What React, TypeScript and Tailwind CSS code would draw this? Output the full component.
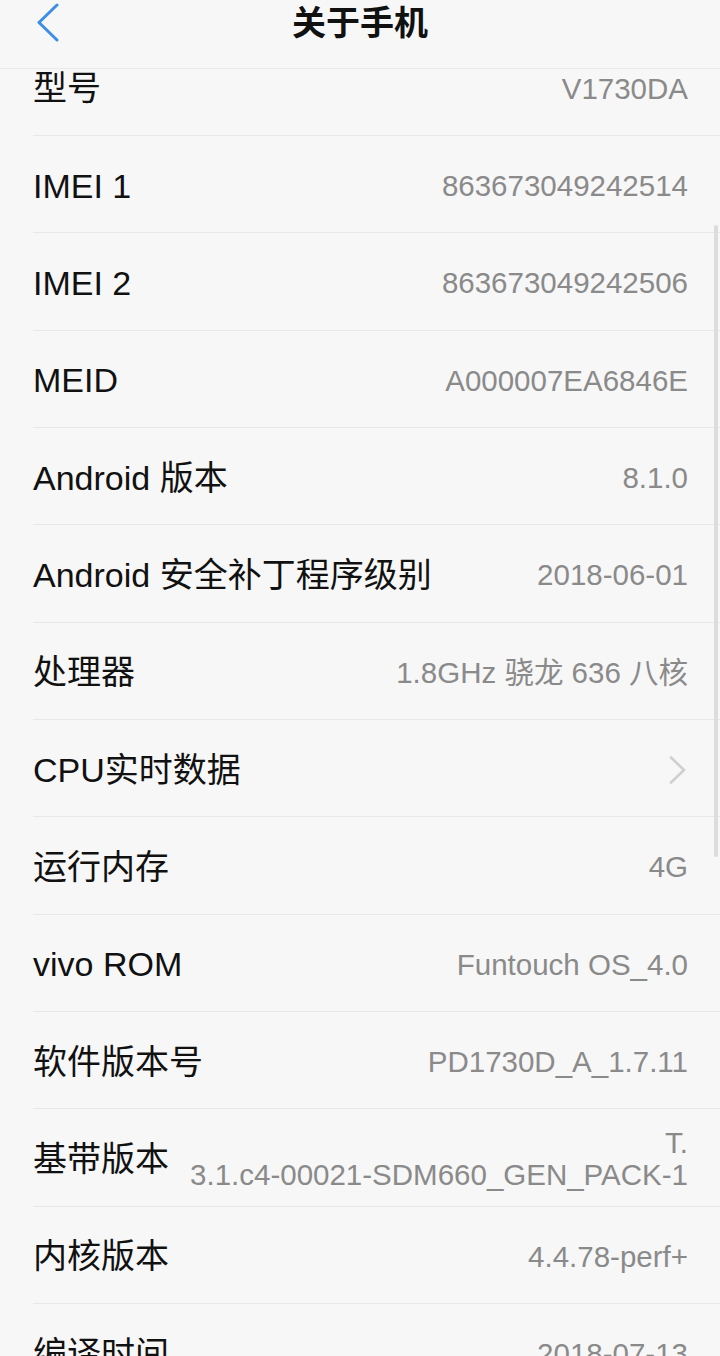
type Row = {
  label: string;
  value?: string;
  lines?: string[];
  link?: boolean;
};

const rows: Row[] = [
  { label: "型号", value: "V1730DA" },
  { label: "IMEI 1", value: "863673049242514" },
  { label: "IMEI 2", value: "863673049242506" },
  { label: "MEID", value: "A000007EA6846E" },
  { label: "Android 版本", value: "8.1.0" },
  { label: "Android 安全补丁程序级别", value: "2018-06-01" },
  { label: "处理器", value: "1.8GHz 骁龙 636 八核" },
  { label: "CPU实时数据", link: true },
  { label: "运行内存", value: "4G" },
  { label: "vivo ROM", value: "Funtouch OS_4.0" },
  { label: "软件版本号", value: "PD1730D_A_1.7.11" },
  { label: "基带版本", lines: ["T.", "3.1.c4-00021-SDM660_GEN_PACK-1"] },
  { label: "内核版本", value: "4.4.78-perf+" },
  { label: "编译时间", value: "2018-07-13" },
];

function InfoRow({ row }: { row: Row }) {
  return (
    <div className="ml-[33px] flex h-[97.33px] shrink-0 items-center justify-between border-b border-[#e8e8e8] pr-[32px] pt-[4px]">
      <span className="whitespace-nowrap text-[34px] text-[#111]">{row.label}</span>
      {row.link ? (
        <svg width="18" height="28" viewBox="0 0 18 28" className="mr-[1px]">
          <polyline
            points="2,1.5 15,14 2,26.5"
            fill="none"
            stroke="#cfcfcf"
            strokeWidth="2.6"
            strokeLinecap="round"
            strokeLinejoin="round"
          />
        </svg>
      ) : row.lines ? (
        <div className="flex flex-col items-end text-[29.5px] leading-[32px] text-[#8a8a8a]">
          {row.lines.map((l) => (
            <span key={l}>{l}</span>
          ))}
        </div>
      ) : (
        <span className="whitespace-nowrap text-[29.5px] text-[#8a8a8a]">{row.value}</span>
      )}
    </div>
  );
}

export default function App() {
  return (
    <div
      className="relative flex h-[1356px] w-[720px] flex-col overflow-hidden bg-[#f7f7f7]"
      style={{ fontFamily: '"Liberation Sans", "Noto Sans CJK SC", sans-serif' }}
    >
      <header className="relative flex h-[69px] shrink-0 justify-center border-b border-[#ebebeb] bg-[#f7f7f7]">
        <svg
          width="26"
          height="40"
          viewBox="0 0 26 40"
          className="absolute left-[35px] top-[3px]"
        >
          <polyline
            points="22,2 4,19.5 22,37"
            fill="none"
            stroke="#3d8ee6"
            strokeWidth="3"
            strokeLinecap="round"
            strokeLinejoin="round"
          />
        </svg>
        <h1 className="pt-[1px] text-[34px] font-bold leading-[44px] text-[#111]">关于手机</h1>
      </header>

      <div className="flex-1 overflow-hidden">
        <div className="-mt-[30.33px] flex flex-col">
          {rows.map((r) => (
            <InfoRow key={r.label} row={r} />
          ))}
        </div>
      </div>

      {/* scrollbar */}
      <div className="absolute right-[2px] top-[225px] h-[632px] w-[4px] rounded-full bg-[#dcdcdc]" />
    </div>
  );
}
